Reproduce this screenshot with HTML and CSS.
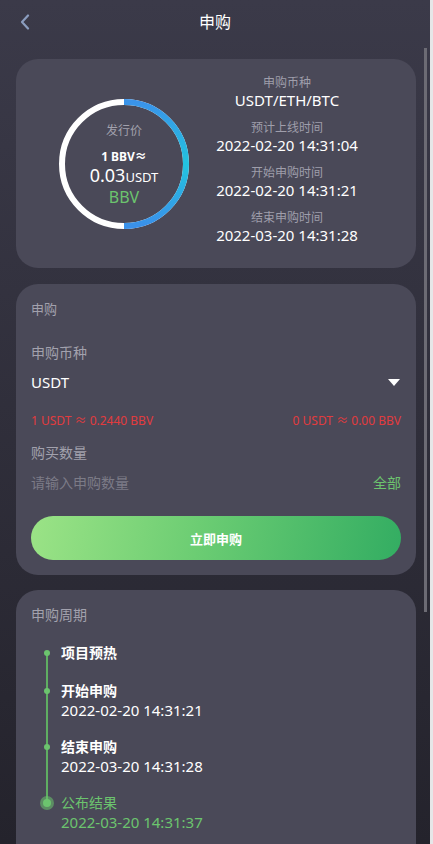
FILE: index.html
```html
<!DOCTYPE html>
<html lang="zh-CN">
<head>
    <meta charset="UTF-8">
    <meta name="viewport" content="width=device-width, initial-scale=1.0">
    <title>申购</title>
    <link rel="stylesheet" href="styles.css">
</head>
<body>
    <div class="app">
        <div class="header">
            <div class="back">
                <svg width="10" height="16" viewBox="0 0 10 16">
                    <polyline points="8,1.5 2,8 8,14.5" fill="none" stroke="#8b9dbf" stroke-width="2.2" stroke-linecap="round" stroke-linejoin="round"/>
                </svg>
            </div>
            <div class="title">申购</div>
            <div></div>
        </div>
        <div class="page">
            <div class="content">
                <!-- 发行价 -->
                <div class="card card_price">
                    <div class="ring">
                        <svg class="ring_svg" width="130" height="130" viewBox="0 0 130 130">
                            <defs>
                                <linearGradient id="arc" x1="0" y1="0" x2="0" y2="1">
                                    <stop offset="0" stop-color="#3a93e9"/>
                                    <stop offset="0.5" stop-color="#22c4df"/>
                                    <stop offset="1" stop-color="#3a90ea"/>
                                </linearGradient>
                            </defs>
                            <circle cx="65" cy="65" r="62" fill="none" stroke="#ffffff" stroke-width="6"/>
                            <path d="M65 3 A62 62 0 0 1 65 127" fill="none" stroke="url(#arc)" stroke-width="6"/>
                        </svg>
                        <div class="ring_label">发行价</div>
                        <div class="ring_rate">1 BBV≈</div>
                        <div class="ring_price">0.03<span>USDT</span></div>
                        <div class="ring_coin">BBV</div>
                    </div>
                    <div class="info">
                        <div class="info_item">
                            <div class="info_label">申购币种</div>
                            <div class="info_value">USDT/ETH/BTC</div>
                        </div>
                        <div class="info_item">
                            <div class="info_label">预计上线时间</div>
                            <div class="info_value">2022-02-20 14:31:04</div>
                        </div>
                        <div class="info_item">
                            <div class="info_label">开始申购时间</div>
                            <div class="info_value">2022-02-20 14:31:21</div>
                        </div>
                        <div class="info_item">
                            <div class="info_label">结束申购时间</div>
                            <div class="info_value">2022-03-20 14:31:28</div>
                        </div>
                    </div>
                </div>

                <!-- 申购 -->
                <div class="card card_buy">
                    <div class="card_title">申购</div>
                    <div class="field_label mt24">申购币种</div>
                    <div class="select">
                        <span>USDT</span>
                        <i class="arrow"></i>
                    </div>
                    <div class="rate_row">
                        <span>1 USDT ≈ 0.2440 BBV</span>
                        <span>0 USDT ≈ 0.00 BBV</span>
                    </div>
                    <div class="field_label mt13">购买数量</div>
                    <div class="input_row">
                        <input type="text" placeholder="请输入申购数量">
                        <span class="all">全部</span>
                    </div>
                    <button class="btn_buy">立即申购</button>
                </div>

                <!-- 申购周期 -->
                <div class="card card_cycle">
                    <div class="card_title">申购周期</div>
                    <div class="timeline">
                        <div class="step">
                            <div class="step_name">项目预热</div>
                        </div>
                        <div class="step">
                            <div class="step_name">开始申购</div>
                            <div class="step_time">2022-02-20 14:31:21</div>
                        </div>
                        <div class="step">
                            <div class="step_name">结束申购</div>
                            <div class="step_time">2022-03-20 14:31:28</div>
                        </div>
                        <div class="step current">
                            <div class="step_name">公布结果</div>
                            <div class="step_time">2022-03-20 14:31:37</div>
                        </div>
                    </div>
                </div>
            </div>
            <div class="rail">
                <div class="thumb"></div>
            </div>
        </div>
    </div>
</body>
</html>
```

FILE: styles.css
```css
* {
    margin: 0;
    padding: 0;
    box-sizing: border-box;
}
html {
    background-color: #e6e6e8;
}
body {
    width: 430px;
    height: 844px;
    overflow: hidden;
    background: linear-gradient(#3b3a49, #24232c);
    font-family: "Noto Sans", "Noto Sans CJK SC", sans-serif;
    color: #ffffff;
}
.header {
    height: 44px;
    display: grid;
    grid-template-columns: 1fr auto 1fr;
    align-items: center;
}
.back {
    padding-left: 20px;
    display: flex;
    align-items: center;
}
.title {
    font-size: 16px;
    line-height: 22px;
}
.page {
    display: flex;
}
.content {
    width: 422px;
    padding: 15px 6px 0 16px;
}
.rail {
    width: 8px;
    padding: 4px 0 0 2px;
}
.thumb {
    width: 3px;
    height: 564px;
    background-color: #6c6b74;
}
.card {
    background-color: #4a4958;
    border-radius: 22px;
}
.card + .card {
    margin-top: 16px;
}
.card_cycle {
    margin-top: 15px !important;
}

/* 发行价 */
.card_price {
    height: 209px;
    display: flex;
    align-items: center;
    padding-left: 43px;
}
.ring {
    position: relative;
    width: 130px;
    height: 130px;
    display: flex;
    flex-direction: column;
    align-items: center;
    justify-content: center;
    text-align: center;
}
.ring_svg {
    position: absolute;
    top: 0;
    left: 0;
}
.ring_label {
    font-size: 12px;
    line-height: 18px;
    color: #a2a1ad;
}
.ring_rate {
    margin-top: 9px;
    font-size: 12px;
    line-height: 16px;
    font-weight: 700;
}
.ring_price {
    font-size: 18px;
    line-height: 21px;
}
.ring_price span {
    font-size: 13px;
}
.ring_coin {
    font-size: 16px;
    line-height: 18px;
    color: #6cc46e;
}
.info {
    width: 180px;
    margin-left: 8px;
    align-self: flex-start;
    padding-top: 16px;
    display: flex;
    flex-direction: column;
    gap: 11px;
    text-align: center;
}
.info_label {
    font-size: 12px;
    line-height: 16px;
    color: #9f9eab;
}
.info_value {
    font-size: 15px;
    line-height: 18px;
}

/* 申购 */
.card_buy {
    padding: 15px 15px 15px;
}
.card_title {
    font-size: 13px;
    line-height: 20px;
    color: #a2a1ad;
}
.field_label {
    font-size: 14px;
    line-height: 20px;
    color: #a2a1ad;
}
.mt24 {
    margin-top: 24px;
}
.mt13 {
    margin-top: 13px;
}
.select {
    margin-top: 8px;
    height: 22px;
    display: flex;
    justify-content: space-between;
    align-items: center;
    font-size: 15px;
}
.arrow {
    width: 0;
    height: 0;
    margin-right: 1px;
    border-left: 6px solid transparent;
    border-right: 6px solid transparent;
    border-top: 7px solid #ffffff;
}
.rate_row {
    margin-top: 19px;
    display: flex;
    justify-content: space-between;
    font-size: 12px;
    line-height: 18px;
    color: #e23b3e;
}
.input_row {
    margin-top: 9px;
    display: flex;
    justify-content: space-between;
    align-items: center;
    height: 20px;
}
.input_row input {
    flex: 1;
    background: none;
    border: none;
    outline: none;
    font-family: inherit;
    font-size: 14px;
    color: #ffffff;
}
.input_row input::placeholder {
    color: #7c7b87;
}
.all {
    font-size: 14px;
    color: #6cc46e;
}
.btn_buy {
    display: block;
    width: 100%;
    height: 44px;
    margin-top: 24px;
    border: none;
    border-radius: 22px;
    background: linear-gradient(100deg, #9be386 0%, #6ccd73 45%, #33ad62 100%);
    color: #ffffff;
    font-family: inherit;
    font-size: 13px;
    font-weight: 700;
}

/* 申购周期 */
.card_cycle {
    padding: 15px 15px 40px;
}
.card_cycle .card_title {
    font-size: 14px;
}
.timeline {
    position: relative;
    margin-top: 18px;
    padding-left: 30px;
    display: flex;
    flex-direction: column;
    gap: 18px;
}
.timeline::before {
    content: "";
    position: absolute;
    left: 15px;
    top: 10px;
    bottom: 28px;
    width: 2px;
    background-color: #5fae62;
}
.step {
    position: relative;
}
.step::before {
    content: "";
    position: absolute;
    left: -17px;
    top: 7px;
    width: 6px;
    height: 6px;
    border-radius: 50%;
    background-color: #6cc46e;
}
.step.current::before {
    left: -18px;
    top: 6px;
    width: 8px;
    height: 8px;
    box-shadow: 0 0 0 3px rgba(108, 196, 110, 0.55);
}
.step_name {
    font-size: 14px;
    line-height: 20px;
    font-weight: 700;
}
.step_time {
    font-size: 15px;
    line-height: 18px;
}
.step.current .step_name {
    font-weight: 400;
    color: #6cc46e;
}
.step.current .step_time {
    color: #6cc46e;
}
```
